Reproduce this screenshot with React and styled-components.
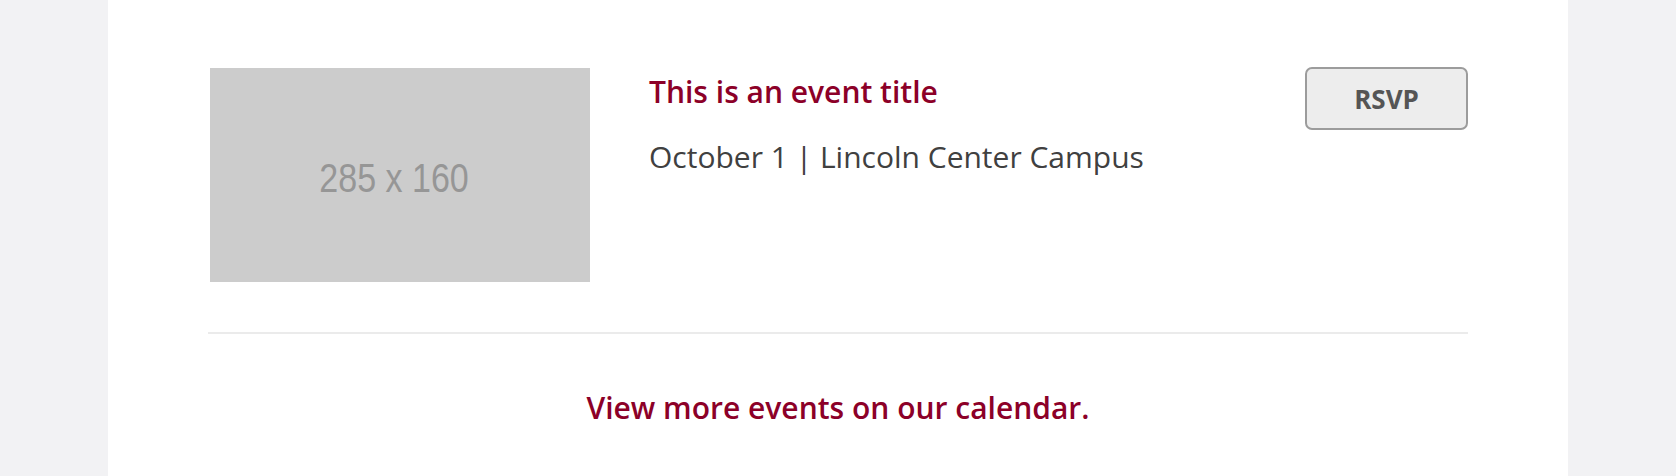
import React from "react";
import styled, { createGlobalStyle } from "styled-components";

const GlobalStyle = createGlobalStyle`
  html, body {
    margin: 0;
    padding: 0;
    background: #f2f2f4;
  }
  body {
    font-family: "Open Sans", "Noto Sans", sans-serif;
  }
`;

const Page = styled.div`
  min-height: 100vh;
  display: flex;
  justify-content: center;
`;

const Panel = styled.main`
  width: 1460px;
  min-height: 100vh;
  box-sizing: border-box;
  background: #ffffff;
  padding: 68px 100px 0;
`;

const EventRow = styled.article`
  display: flex;
  align-items: flex-start;
  padding-bottom: 50px;
  border-bottom: 2px solid #ebebeb;
`;

const Thumb = styled.div`
  flex: 0 0 380px;
  height: 214px;
  margin-left: 2px;
  background: #cccccc;
  display: flex;
  align-items: center;
  justify-content: center;
  overflow: hidden;
`;

const ThumbLabel = styled.span`
  font-family: "Liberation Sans", Arial, sans-serif;
  font-size: 41px;
  color: #969696;
  white-space: nowrap;
  transform: translate(-6px, 3px) scaleX(0.83);
`;

const Info = styled.div`
  flex: 1;
  margin-left: 59px;
  padding-top: 6px;
`;

const Title = styled.h2`
  margin: 0;
  font-size: 30px;
  line-height: 36px;
  font-weight: 600;
  color: #8c0028;
`;

const Meta = styled.p`
  margin: 29px 0 0;
  font-size: 30px;
  line-height: 36px;
  font-weight: 400;
  color: #404040;
`;

const RsvpButton = styled.button`
  flex: none;
  width: 163px;
  height: 63px;
  margin-top: -1px;
  box-sizing: border-box;
  border: 2px solid #9c9c9c;
  border-radius: 7px;
  background: #ededed;
  font-family: "Open Sans", "Noto Sans", sans-serif;
  font-size: 26px;
  font-weight: 700;
  color: #555555;
  cursor: pointer;
`;

const Footer = styled.div`
  padding-top: 56px;
  text-align: center;
`;

const CalendarLink = styled.a`
  font-size: 30px;
  line-height: 36px;
  font-weight: 600;
  color: #8c0028;
  text-decoration: none;
`;

export default function App() {
  return (
    <>
      <GlobalStyle />
      <Page>
        <Panel>
          <EventRow>
            <Thumb>
              <ThumbLabel>285 x 160</ThumbLabel>
            </Thumb>
            <Info>
              <Title>This is an event title</Title>
              <Meta>October 1 | Lincoln Center Campus</Meta>
            </Info>
            <RsvpButton>RSVP</RsvpButton>
          </EventRow>
          <Footer>
            <CalendarLink href="#">View more events on our calendar.</CalendarLink>
          </Footer>
        </Panel>
      </Page>
    </>
  );
}
